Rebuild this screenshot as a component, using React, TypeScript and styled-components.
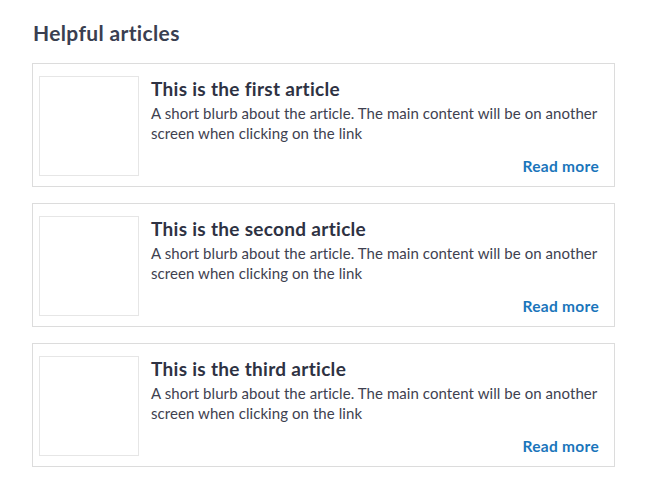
import React from "react";
import styled, { createGlobalStyle } from "styled-components";

const Global = createGlobalStyle`
  html, body { margin: 0; padding: 0; background: #fff; }
  body { font-family: "Lato", "Liberation Sans", sans-serif; }
`;

const Page = styled.div`
  padding: 19px 40px 20px 32px;
  width: 583px;
`;

const Heading = styled.h2`
  margin: 0 0 16px 1px;
  font-size: 21px;
  line-height: 28px;
  font-weight: 700;
  letter-spacing: 0.35px;
  color: #3a3f51;
`;

const List = styled.div`
  display: flex;
  flex-direction: column;
  gap: 16px;
`;

const Card = styled.article`
  display: flex;
  gap: 12px;
  border: 1px solid #dcdcdc;
  padding: 12px 13px 10px 6px;
  height: 100px;
`;

const Thumb = styled.div`
  flex: 0 0 98px;
  height: 98px;
  border: 1px solid #e6e6e6;
`;

const Body = styled.div`
  flex: 1;
  display: flex;
  flex-direction: column;
  padding-top: 1px;
`;

const Title = styled.h3`
  margin: 0 0 2px;
  font-size: 19px;
  line-height: 24px;
  font-weight: 700;
  letter-spacing: 0.3px;
  color: #2e3243;
`;

const Blurb = styled.p`
  margin: 0;
  font-size: 15px;
  line-height: 20px;
  letter-spacing: 0.07px;
  color: #3e4150;
`;

const More = styled.a`
  margin-top: auto;
  margin-right: 2px;
  align-self: flex-end;
  font-size: 15.5px;
  line-height: 20px;
  font-weight: 700;
  letter-spacing: 0.3px;
  color: #1a75bb;
  text-decoration: none;
`;

const articles = ["first", "second", "third"];

export default function App() {
  return (
    <Page>
      <Global />
      <Heading>Helpful articles</Heading>
      <List>
        {articles.map((a) => (
          <Card key={a}>
            <Thumb />
            <Body>
              <Title>This is the {a} article</Title>
              <Blurb>
                A short blurb about the article. The main content will be on another screen when clicking on the link
              </Blurb>
              <More href="#">Read more</More>
            </Body>
          </Card>
        ))}
      </List>
    </Page>
  );
}
